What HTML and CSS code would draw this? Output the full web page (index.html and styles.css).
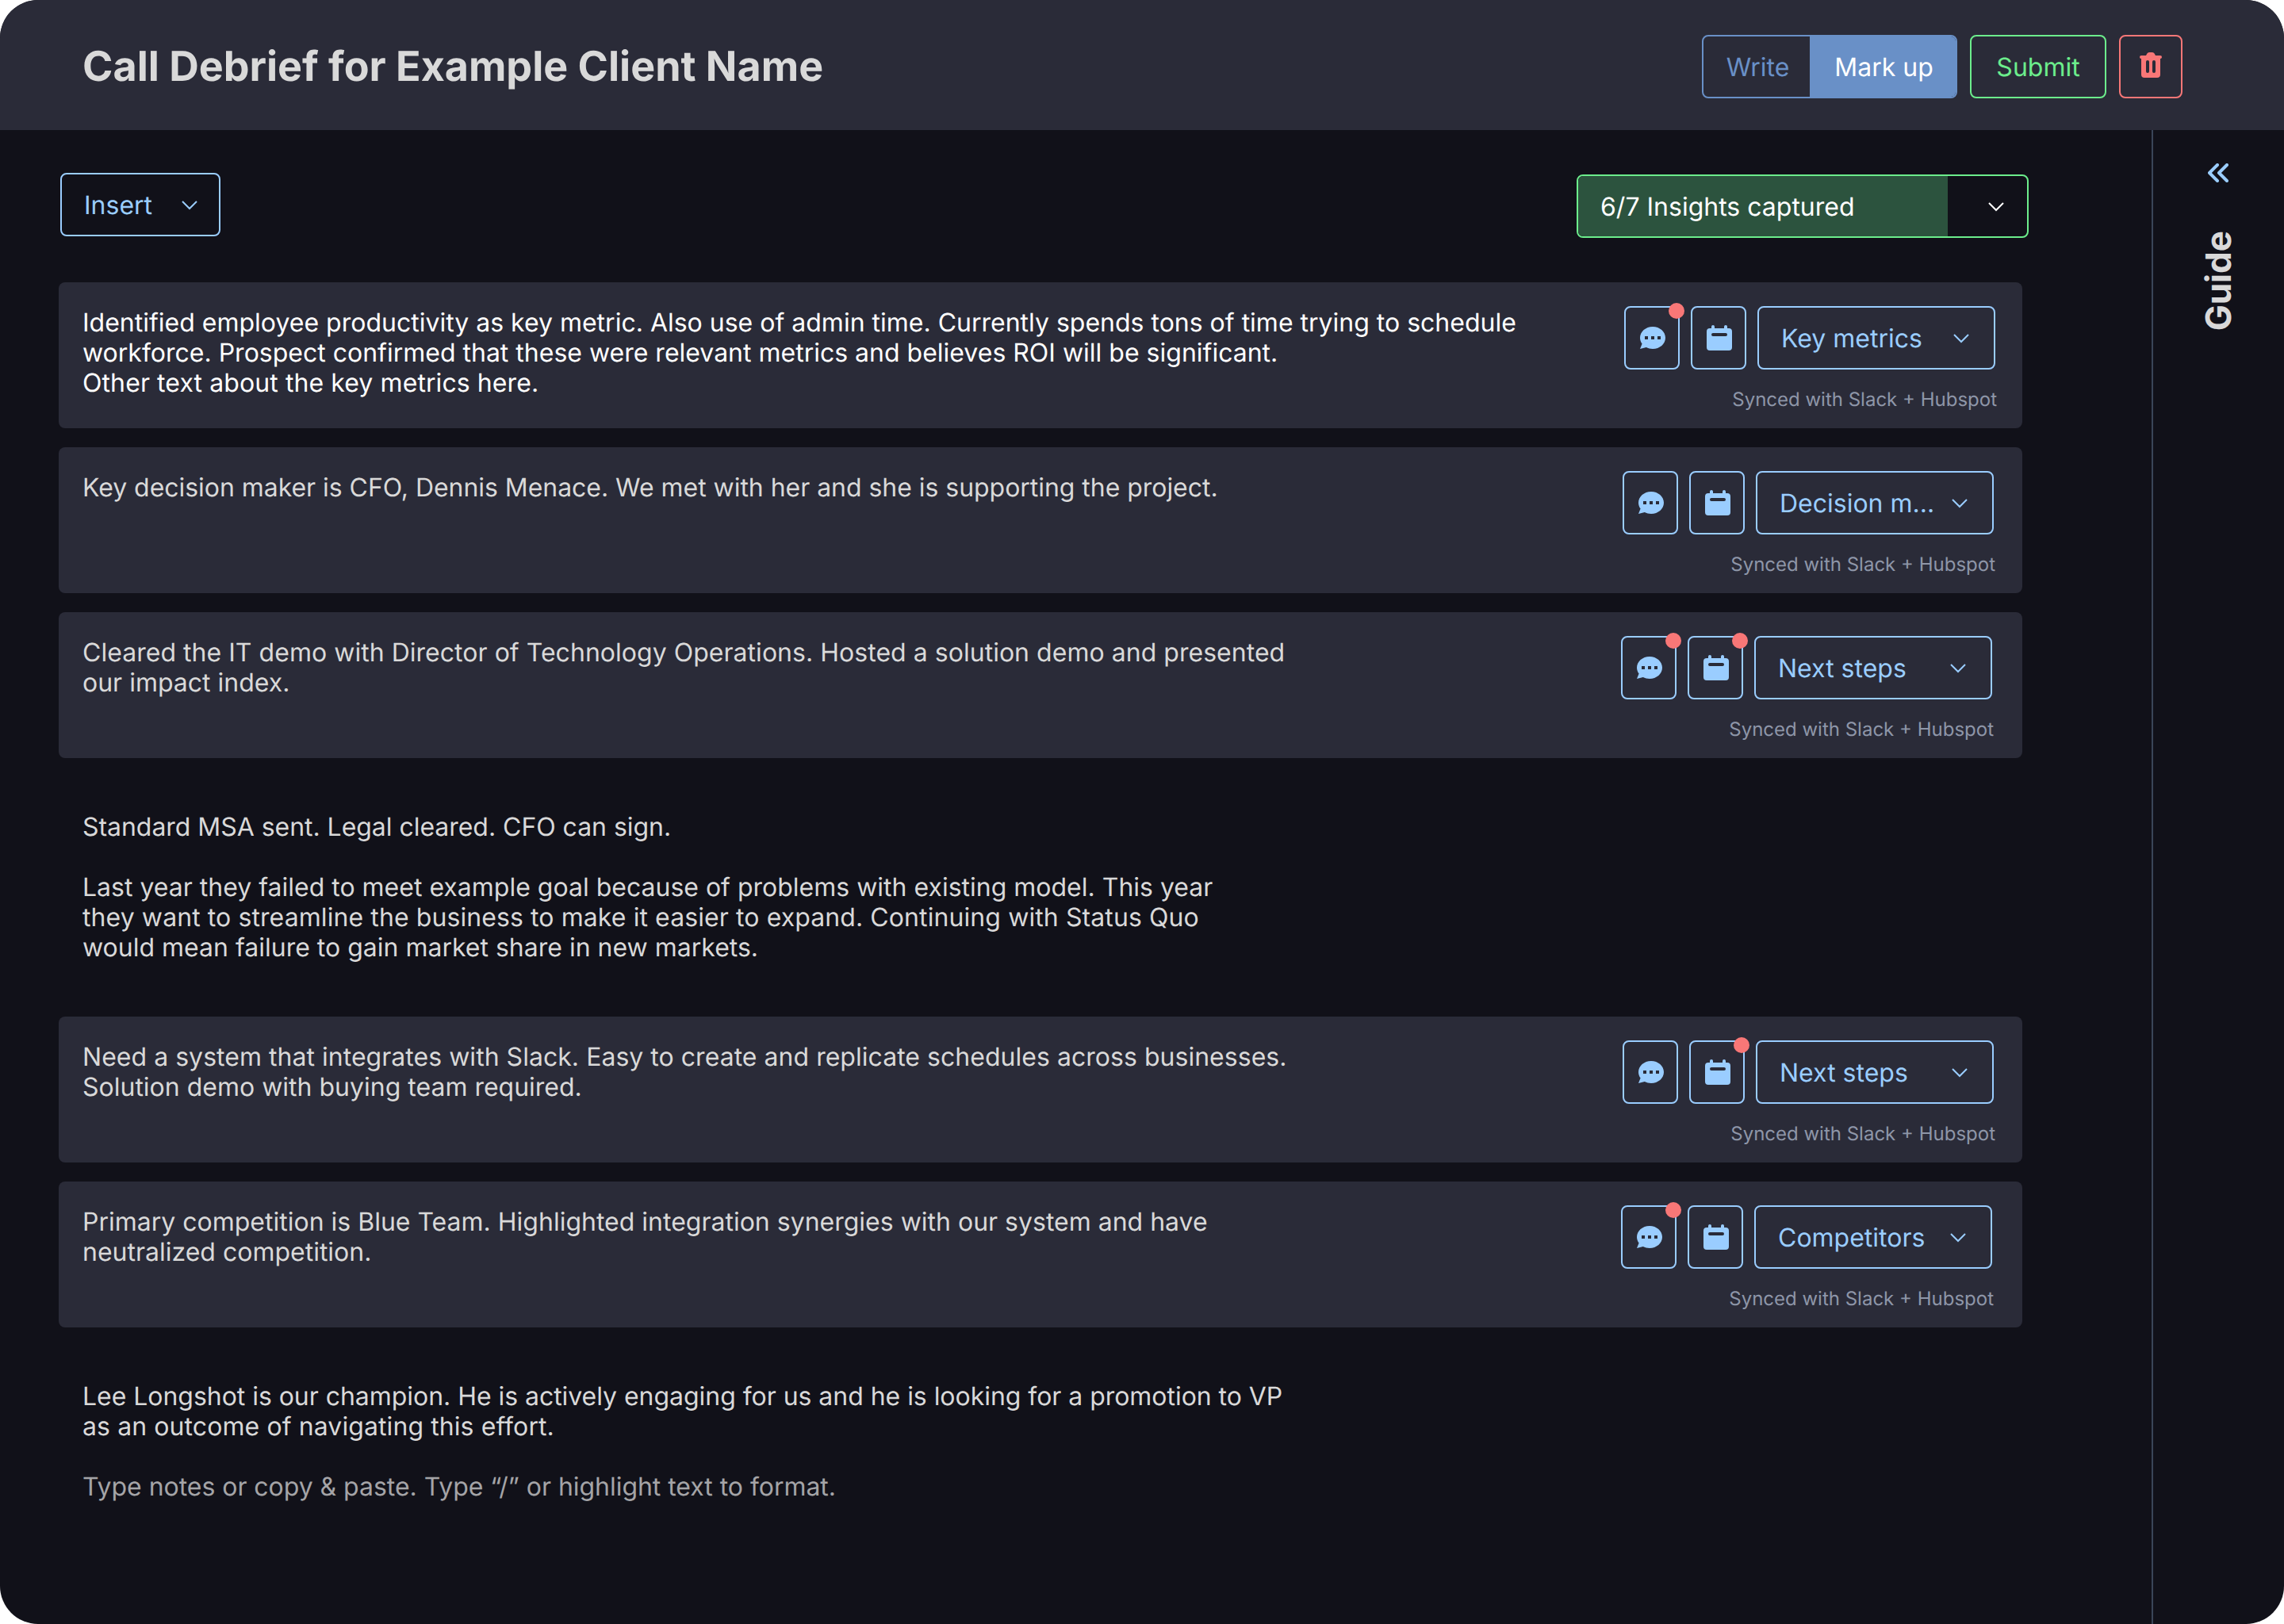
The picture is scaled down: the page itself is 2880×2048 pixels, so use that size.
FILE: index.html
```
<!DOCTYPE html>
<html lang="en">
<head>
<meta charset="utf-8">
<title>Call Debrief</title>
<link rel="stylesheet" href="styles.css">
</head>
<body>
<svg class="defs" aria-hidden="true">
  <symbol id="chat" viewBox="0 0 32 32">
    <path fill-rule="evenodd" d="M16 2C24.840 2 32 8.270 32 16S24.840 30 16 30C13 30 10.200 29.300 7.800 28L0 30L2.600 23.600C1 21.500 0 18.900 0 16C0 8.270 7.160 2 16 2zM6 14v4h4v-4zM14 14v4h4v-4zM22 14v4h4v-4z"/>
  </symbol>
  <symbol id="calendar" viewBox="0 0 32 32">
    <path fill-rule="evenodd" d="M8 0a2 2 0 0 1 2 2v2h12V2a2 2 0 0 1 4 0v2h2a4 4 0 0 1 4 4v20a4 4 0 0 1-4 4H4a4 4 0 0 1-4-4V8a4 4 0 0 1 4-4h2V2a2 2 0 0 1 2-2zM8 10a2 2 0 0 0 0 4h16a2 2 0 0 0 0-4z"/>
  </symbol>
  <symbol id="trash" viewBox="0 0 28 32">
    <path fill-rule="evenodd" d="M12 0h4a3 3 0 0 1 2.600 1.600L20 4H26a2 2 0 0 1 0 4v20a4 4 0 0 1-4 4H6a4 4 0 0 1-4-4V8a2 2 0 0 1 0-4h6l1.400-2.400A3 3 0 0 1 12 0zM10 10a2 2 0 0 0-2 2v12a2 2 0 0 0 4 0V12a2 2 0 0 0-2-2zM18 10a2 2 0 0 0-2 2v12a2 2 0 0 0 4 0V12a2 2 0 0 0-2-2z"/>
  </symbol>
  <symbol id="chevron" viewBox="0 0 20 12">
    <path d="M1 1l9 9 9-9" fill="none" stroke="currentColor" stroke-width="2"/>
  </symbol>
</svg>

<div class="app">
  <header class="header">
    <h1 class="title">Call Debrief for Example Client Name</h1>
    <div class="actions">
      <div class="toggle">
        <button class="toggle-item">Write</button>
        <button class="toggle-item active">Mark up</button>
      </div>
      <button class="btn submit">Submit</button>
      <button class="btn delete"><svg class="trash"><use href="#trash"/></svg></button>
    </div>
  </header>

  <div class="body">
    <main class="main">
      <div class="toolbar">
        <button class="btn insert">Insert <svg class="chevron"><use href="#chevron"/></svg></button>
        <div class="insights">
          <span class="insights-label">6/7 Insights captured</span>
          <span class="insights-toggle"><svg class="chevron"><use href="#chevron"/></svg></span>
        </div>
      </div>

      <section class="card current">
        <p class="note">Identified employee productivity as key metric. Also use of admin time. Currently spends tons of time trying to schedule<br>workforce. Prospect confirmed that these were relevant metrics and believes ROI will be significant.<br><span class="looser">Other text about the key metrics here.</span></p>
        <div class="side side-a">
          <div class="controls">
            <button class="btn icon-btn"><svg class="icon"><use href="#chat"/></svg><i class="dot"></i></button>
            <button class="btn icon-btn"><svg class="icon"><use href="#calendar"/></svg></button>
            <button class="btn select">Key metrics <svg class="chevron"><use href="#chevron"/></svg></button>
          </div>
          <span class="sync">Synced with Slack + Hubspot</span>
        </div>
      </section>

      <section class="card">
        <p class="note tight">Key decision maker is CFO, Dennis Menace. We met with her and she is supporting the project.</p>
        <div class="side side-b">
          <div class="controls">
            <button class="btn icon-btn"><svg class="icon"><use href="#chat"/></svg></button>
            <button class="btn icon-btn"><svg class="icon"><use href="#calendar"/></svg></button>
            <button class="btn select">Decision m... <svg class="chevron"><use href="#chevron"/></svg></button>
          </div>
          <span class="sync">Synced with Slack + Hubspot</span>
        </div>
      </section>

      <section class="card">
        <p class="note"><span class="loose">Cleared the IT demo with Director of Technology Operations. Hosted a solution demo and presented</span><br>our impact index.</p>
        <div class="side side-c">
          <div class="controls">
            <button class="btn icon-btn"><svg class="icon"><use href="#chat"/></svg><i class="dot"></i></button>
            <button class="btn icon-btn"><svg class="icon"><use href="#calendar"/></svg><i class="dot"></i></button>
            <button class="btn select">Next steps <svg class="chevron"><use href="#chevron"/></svg></button>
          </div>
          <span class="sync">Synced with Slack + Hubspot</span>
        </div>
      </section>

      <div class="plain plain-mid">
        <p class="note tight">Standard MSA sent. Legal cleared. CFO can sign.</p>
        <p class="note">Last year they failed to meet example goal because of problems with existing model. This year<br><span class="looser">they want to streamline the business to make it easier to expand. Continuing with Status Quo</span><br>would mean failure to gain market share in new markets.</p>
      </div>

      <section class="card">
        <p class="note"><span class="loose">Need a system that integrates with Slack. Easy to create and replicate schedules across businesses.</span><br>Solution demo with buying team required.</p>
        <div class="side side-b">
          <div class="controls">
            <button class="btn icon-btn"><svg class="icon"><use href="#chat"/></svg></button>
            <button class="btn icon-btn"><svg class="icon"><use href="#calendar"/></svg><i class="dot"></i></button>
            <button class="btn select">Next steps <svg class="chevron"><use href="#chevron"/></svg></button>
          </div>
          <span class="sync">Synced with Slack + Hubspot</span>
        </div>
      </section>

      <section class="card">
        <p class="note">Primary competition is Blue Team. Highlighted integration synergies with our system and have<br>neutralized competition.</p>
        <div class="side side-c">
          <div class="controls">
            <button class="btn icon-btn"><svg class="icon"><use href="#chat"/></svg><i class="dot"></i></button>
            <button class="btn icon-btn"><svg class="icon"><use href="#calendar"/></svg></button>
            <button class="btn select">Competitors <svg class="chevron"><use href="#chevron"/></svg></button>
          </div>
          <span class="sync">Synced with Slack + Hubspot</span>
        </div>
      </section>

      <div class="plain">
        <p class="note"><span class="tight">Lee Longshot is our champion. He is actively engaging for us and he is looking for a promotion to VP</span><br><span class="looser">as an outcome of navigating this effort.</span></p>
        <p class="note hint tight">Type notes or copy &amp; paste. Type “/” or highlight text to format.</p>
      </div>
    </main>

    <aside class="guide">
      <svg class="collapse" viewBox="0 0 26 24"><path d="M12 2L2 12l10 10M24 2L14 12l10 10" fill="none" stroke="currentColor" stroke-width="4" stroke-linecap="round" stroke-linejoin="round"/></svg>
      <span class="guide-label">Guide</span>
    </aside>
  </div>
</div>
</body>
</html>
```
FILE: styles.css
```
* { box-sizing: border-box; }

body {
  margin: 0;
  background: #fff;
  font-family: Inter, "Liberation Sans", sans-serif;
  font-size: 32px;
  line-height: 38px;
  font-optical-sizing: none;
  text-rendering: geometricPrecision;
  color: #d9d9d9;
}

.defs { display: none; }

.app {
  display: flex;
  flex-direction: column;
  width: 2880px;
  height: 2048px;
  border-radius: 48px;
  overflow: hidden;
  background: #111119;
}

.header {
  display: flex;
  flex: none;
  align-items: center;
  justify-content: space-between;
  height: 164px;
  padding: 4px 128px 0 104px;
  background: #2a2b38;
}

.title {
  margin: 0;
  font-size: 52px;
  line-height: 62px;
  font-weight: 700;
}

.actions { display: flex; gap: 16px; }

button {
  margin: 0;
  font: inherit;
  text-rendering: inherit;
  color: inherit;
  background: none;
  border: 0;
}

.btn {
  display: flex;
  align-items: center;
  height: 80px;
  padding: 2px 28px 0;
  border: 2px solid #9acdff;
  border-radius: 8px;
  color: #9acdff;
}

.toggle {
  display: flex;
  width: 322px;
  height: 80px;
  border: 2px solid #6990c7;
  border-radius: 8px;
  overflow: hidden;
}

.toggle-item {
  width: 134px;
  padding: 2px 0 0 3px;
  color: #6990c7;
}

.toggle-item.active {
  flex: 1;
  color: #fff;
  background: #6990c7;
}

.submit {
  justify-content: center;
  width: 172px;
  border-color: #6ced8c;
  color: #6ced8c;
}

.delete {
  justify-content: center;
  width: 80px;
  padding: 0 0 4px;
  border-color: #f87777;
}

.trash { width: 28px; height: 32px; fill: #f87777; }

.chevron { flex: none; width: 20px; height: 12px; }

.body { display: flex; flex: 1; }

.main {
  display: flex;
  flex: 1;
  flex-direction: column;
  padding: 54px 0 0 74px;
}

.toolbar {
  display: flex;
  justify-content: space-between;
  width: 2484px;
  margin-bottom: 56px;
  padding-left: 2px;
}

.insert {
  justify-content: space-between;
  width: 202px;
  padding-right: 27px;
}

.insights {
  display: flex;
  width: 570px;
  height: 80px;
  margin-top: 2px;
  border: 2px solid #6ced8c;
  border-radius: 8px;
  overflow: hidden;
  color: #fff;
}

.insights-label {
  width: 466px;
  padding: 20px 28px 18px;
  background: #2c533e;
}

.insights-toggle {
  display: flex;
  flex: 1;
  align-items: center;
  justify-content: flex-end;
  padding: 2px 29px 0 0;
}

.card {
  display: flex;
  justify-content: space-between;
  width: 2476px;
  height: 184px;
  margin-bottom: 24px;
  padding: 30px 30px 0;
  border-radius: 8px;
  background: #2a2b38;
}

.note {
  margin: 2px 0 0;
  white-space: nowrap;
}

.current .note { color: #fff; }

.tight { letter-spacing: -0.04px; }
.loose { letter-spacing: 0.03px; }
.looser { letter-spacing: 0.09px; }

.side {
  display: flex;
  flex-direction: column;
  align-items: flex-end;
}

.side-a { margin-right: 2px; }
.side-b { margin-right: 4px; }
.side-c { margin-right: 6px; }

.controls { display: flex; gap: 14px; margin-right: 2px; }

.icon-btn {
  position: relative;
  justify-content: center;
  width: 70px;
  padding: 0 0 0 2px;
}

.icon { width: 32px; height: 32px; fill: #9acdff; }

.dot {
  position: absolute;
  top: -6px;
  right: -8px;
  width: 20px;
  height: 20px;
  border-radius: 50%;
  background: #f87777;
}

.select {
  justify-content: space-between;
  width: 300px;
  padding-right: 31px;
}

.sync {
  margin-top: 23px;
  font-size: 24px;
  line-height: 30px;
  color: #8e96a8;
}

.plain { padding: 44px 0 0 30px; }
.plain .note { margin: 0 0 38px; }
.plain-mid { height: 302px; }

.hint { color: #a4a4a7; }

.guide {
  display: flex;
  flex-direction: column;
  align-items: center;
  width: 167px;
  padding: 42px 1px 0 0;
  border-left: 2px solid #3a4558;
}

.collapse { width: 26px; height: 24px; color: #9acdff; }

.guide-label {
  margin-top: 61px;
  font-size: 44px;
  line-height: 52px;
  font-weight: 700;
  writing-mode: vertical-rl;
  transform: rotate(180deg);
}
```
